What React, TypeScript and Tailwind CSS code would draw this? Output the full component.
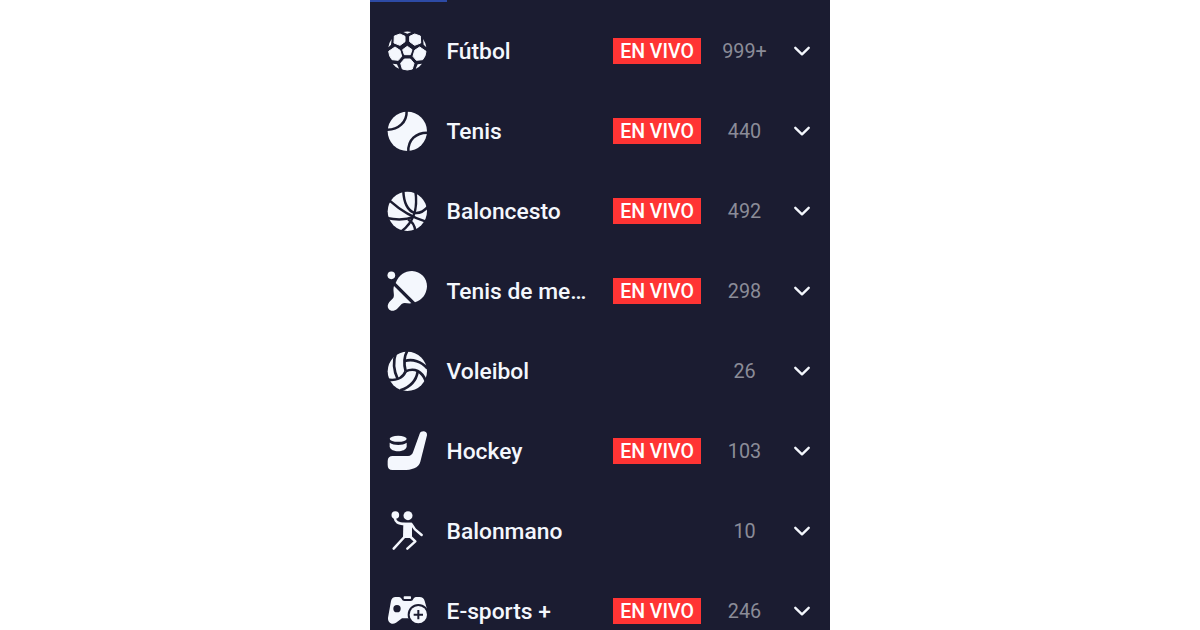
import type { ReactNode } from 'react';

const INK = '#1b1c31';

function Icon({ children }: { children: ReactNode }) {
  return (
    <svg viewBox="0 0 168 168" className="mt-0.5 h-14 w-14 shrink-0" fill="#f4f7fd" stroke="none">
      {children}
    </svg>
  );
}

function Football() {
  return (
    <Icon>
      <g stroke="#f4f7fd" strokeWidth="3" strokeLinejoin="round">
        <path d="M82 67 96 77 91 92H73L68 77Z" />
        <path d="M43 36 60 30 75 37V53L60 64 42 57Z" />
        <path d="M121 36 104 30 89 37V53L104 64 122 57Z" />
        <path d="M45 69 60 79 65 97 55 109 36 107Q27 97 26 82Z" />
        <path d="M119 69 104 79 99 97 109 109 128 107Q137 97 138 82Z" />
        <path d="M73 105H91L102 118 97 135Q82 141 67 135L62 118Z" />
      </g>
      <path d="M70 24Q82 21 94 24L82 29Z" />
      <path d="M35 45 33 62 25 70Q27 56 35 45Z" />
      <path d="M129 45 131 62 139 70Q137 56 129 45Z" />
      <path d="M38 119 51 121 57 134Q45 129 38 119Z" />
      <path d="M126 119 113 121 107 134Q119 129 126 119Z" />
    </Icon>
  );
}

function Tennis() {
  return (
    <Icon>
      <circle cx="82" cy="82" r="59" />
      <g fill="none" stroke={INK} strokeWidth="7.5">
        <path d="M20 77C55 78 81 55 80 20" />
        <path d="M85 144C83 108 108 85 144 86" />
      </g>
    </Icon>
  );
}

function Basketball() {
  return (
    <Icon>
      <circle cx="82" cy="82" r="59" />
      <g fill="none" stroke={INK} strokeWidth="7.5">
        <path d="M28 49C56 74 88 98 138 113" />
        <path d="M70 20C71 53 82 82 106 87C120 88 133 81 144 68" />
        <path d="M106 20C112 60 111 108 63 143" />
        <path d="M20 102C48 108 78 108 104 98" />
        <path d="M84 107C96 112 104 122 106 142" />
      </g>
    </Icon>
  );
}

function TableTennis() {
  return (
    <Icon>
      <circle cx="34" cy="34" r="11.5" />
      <path d="M47 57C56 33 74 21 96 21C123 22 141 43 141 67C140 90 126 109 105 115Z" />
      <path d="M42 66 94 118C84 120 73 114 65 120L51 135C43 142 31 142 26 135C21 128 23 121 28 114L39 103C46 94 37 81 42 66Z" />
    </Icon>
  );
}

function Volleyball() {
  return (
    <Icon>
      <circle cx="82" cy="82" r="59" />
      <g fill="none" stroke={INK} strokeWidth="8">
        <path d="M82 20C72 38 71 60 77 82" />
        <path d="M48 26C38 54 42 82 53 105" />
        <path d="M74 51C98 44 124 52 142 73" />
        <path d="M77 82C104 70 126 82 137 110" />
        <path d="M20 106C47 112 68 102 77 82" />
        <path d="M113 83C109 108 90 129 61 139" />
      </g>
    </Icon>
  );
}

function Hockey() {
  return (
    <Icon>
      <ellipse cx="54.5" cy="44.5" rx="25.5" ry="9" />
      <path d="M29 56C42 65 68 65 80 56V68C76 86 33 86 29 68Z" />
      <path d="M119 29C123 18 143 20 141 34L121 113C116 132 95 138 70 138H37C28 138 23 133 23 123V111C23 101 29 96 38 96H84C92 96 97 91 99 85Z" />
    </Icon>
  );
}

function Handball() {
  return (
    <Icon>
      <circle cx="46" cy="33" r="11.5" />
      <circle cx="84" cy="35" r="13.5" />
      <path d="M70 56H96V102H69Z" />
      <g fill="none" stroke="#f4f7fd" strokeWidth="7.5" strokeLinecap="round" strokeLinejoin="round">
        <path d="M44 41C46 54 53 59 75 60H94L105 76 125 93" />
        <path d="M73 99 41 134" />
        <path d="M92 99 106 112 82 134" />
      </g>
    </Icon>
  );
}

function Esports() {
  return (
    <Icon>
      <rect x="71" y="37" width="22" height="8" rx="2" />
      <path d="M47 39H57C66 39 64 51 74 51H92C101 51 99 39 108 39H118C127 39 132 43 134 51L140 72V108H96L84 103H66L48 116C35 124 23 115 24 101L33 51C35 43 39 39 47 39Z" />
      <circle cx="51" cy="74" r="11" fill={INK} />
      <circle cx="115" cy="92" r="32" fill={INK} />
      <circle cx="115" cy="92" r="26" />
      <path d="M115 78V106M101 92H129" fill="none" stroke={INK} strokeWidth="6" />
    </Icon>
  );
}

type Sport = { name: string; count: string; live: boolean; icon: ReactNode };

const sports: Sport[] = [
  { name: 'Fútbol', count: '999+', live: true, icon: <Football /> },
  { name: 'Tenis', count: '440', live: true, icon: <Tennis /> },
  { name: 'Baloncesto', count: '492', live: true, icon: <Basketball /> },
  { name: 'Tenis de me…', count: '298', live: true, icon: <TableTennis /> },
  { name: 'Voleibol', count: '26', live: false, icon: <Volleyball /> },
  { name: 'Hockey', count: '103', live: true, icon: <Hockey /> },
  { name: 'Balonmano', count: '10', live: false, icon: <Handball /> },
  { name: 'E-sports +', count: '246', live: true, icon: <Esports /> },
];

function SportRow({ name, count, live, icon }: Sport) {
  return (
    <li className="flex h-20 shrink-0 items-center pl-2.5">
      {icon}
      <span className="ml-[10.5px] w-[142px] pt-px text-[22.8px] leading-8 font-medium whitespace-nowrap text-[#f4f7fd]">
        {name}
      </span>
      <div className="ml-[24.5px] flex w-[88px] justify-center">
        {live && (
          <span className="flex h-[26px] w-full items-center justify-center bg-[#ff3434] pt-0.5 text-[19.5px] leading-none font-medium whitespace-nowrap text-white">
            EN VIVO
          </span>
        )}
      </div>
      <span className="ml-[13px] w-[61px] pt-0.5 text-center text-[19.8px] leading-8 text-[#8b8c98]">
        {count}
      </span>
      <svg
        viewBox="0 0 18 12"
        className="ml-[17.5px] h-3 w-[18px] shrink-0"
        fill="none"
        stroke="#f4f7fd"
        strokeWidth="2.4"
        strokeLinecap="round"
        strokeLinejoin="round"
      >
        <path d="M2.3 2.8 9 9.3 15.7 2.8" />
      </svg>
    </li>
  );
}

export default function App() {
  return (
    <div className="flex h-[630px] justify-center overflow-hidden bg-white font-['Roboto',sans-serif]">
      <main className="flex w-[460px] flex-col overflow-hidden bg-[#1b1c31]">
        <div className="h-[11px] shrink-0">
          <div className="h-0.5 w-[77px] bg-[#2d4aa5]" />
        </div>
        <ul className="flex flex-col">
          {sports.map((sport) => (
            <SportRow key={sport.name} {...sport} />
          ))}
        </ul>
      </main>
    </div>
  );
}
